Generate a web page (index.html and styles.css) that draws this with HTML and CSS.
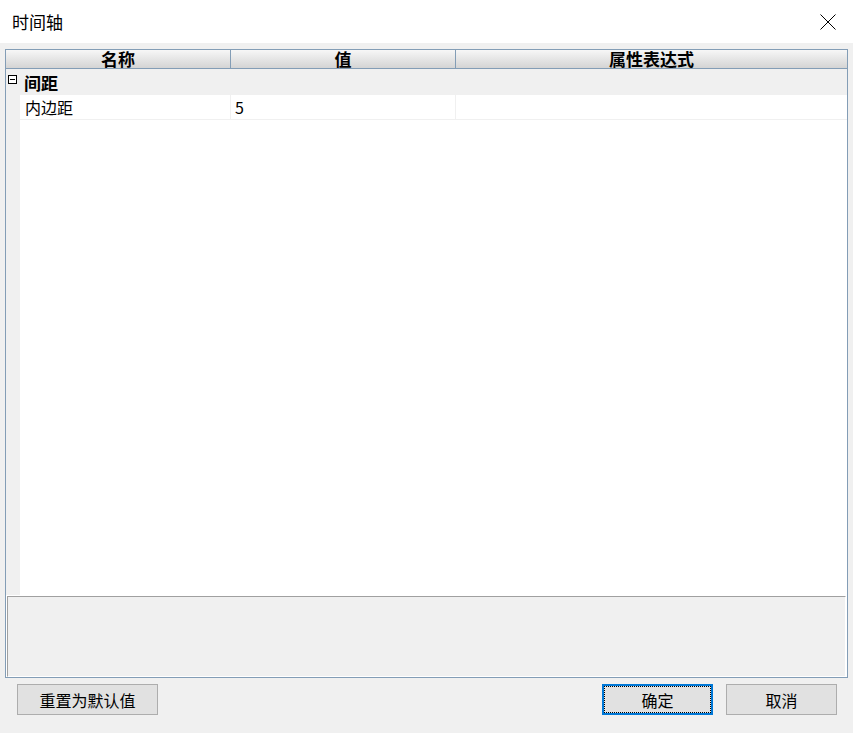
FILE: index.html
```html
<!DOCTYPE html>
<html lang="zh-CN">
<head>
    <meta charset="UTF-8">
    <title>时间轴</title>
    <link rel="stylesheet" href="styles.css">
</head>
<body>
    <div class="dialog">
        <!-- Title bar -->
        <div class="titlebar">
            <span class="title">时间轴</span>
            <svg class="close" width="16" height="16" viewBox="0 0 16 16">
                <path d="M0.5 0.5 L15.5 15.5 M15.5 0.5 L0.5 15.5" stroke="#000" stroke-width="1" fill="none"/>
            </svg>
        </div>

        <div class="content">
            <!-- Property grid -->
            <div class="grid">
                <div class="header">
                    <div class="hcell col1">名称</div>
                    <div class="hcell col2">值</div>
                    <div class="hcell col3">属性表达式</div>
                </div>
                <div class="tree">
                    <div class="group">
                        <span class="toggle"></span>
                        <span class="group-name">间距</span>
                    </div>
                    <div class="tree-rows">
                        <div class="gutter"></div>
                        <div class="rows">
                            <div class="row">
                                <div class="cell name">内边距</div>
                                <div class="cell value">5</div>
                                <div class="cell expr"></div>
                            </div>
                        </div>
                    </div>
                </div>
                <div class="desc"></div>
            </div>

            <!-- Buttons -->
            <div class="buttons">
                <button class="btn reset">重置为默认值</button>
                <div class="spacer"></div>
                <button class="btn ok">确定</button>
                <button class="btn cancel">取消</button>
            </div>
        </div>
    </div>
</body>
</html>
```

FILE: styles.css
```css
html, body {
    margin: 0;
    padding: 0;
}
body {
    width: 853px;
    height: 733px;
    background: #f0f0f0;
    font-family: "Noto Sans CJK SC", "DejaVu Sans", sans-serif;
    color: #000;
    overflow: hidden;
}
.dialog {
    display: flex;
    flex-direction: column;
    height: 733px;
}
.titlebar {
    height: 43px;
    background: #fff;
    display: flex;
    align-items: center;
    justify-content: space-between;
    padding: 0 17px 0 12px;
}
.title {
    font-size: 17px;
    line-height: 20px;
}
.close {
    display: block;
    margin-top: 1px;
}
.content {
    flex: 1;
    display: flex;
    flex-direction: column;
    padding: 6px 5px 0 5px;
}
.grid {
    height: 627px;
    border: 1px solid #839db6;
    display: flex;
    flex-direction: column;
    background: #fff;
}
.header {
    display: flex;
    height: 18px;
    border-bottom: 1px solid #839db6;
    background: linear-gradient(#f7f7f7, #d4d4d4);
}
.hcell {
    font-size: 17px;
    font-weight: bold;
    line-height: 18px;
    text-align: center;
    height: 18px;
}
.col1 {
    width: 224px;
    border-right: 1px solid #839db6;
}
.col2 {
    width: 224px;
    border-right: 1px solid #839db6;
}
.col3 {
    flex: 1;
}
.tree {
    flex: 1;
    display: flex;
    flex-direction: column;
}
.group {
    height: 26px;
    background: #f0f0f0;
    display: flex;
    align-items: center;
}
.toggle {
    width: 7px;
    height: 7px;
    border: 1px solid #000;
    margin: 0 0 5px 2px;
    position: relative;
    background: #fff;
}
.toggle::after {
    content: "";
    position: absolute;
    left: 1px;
    right: 1px;
    top: 3px;
    height: 1px;
    background: #000;
}
.group-name {
    font-size: 17px;
    font-weight: bold;
    margin-left: 7px;
}
.tree-rows {
    flex: 1;
    display: flex;
}
.gutter {
    width: 14px;
    background: #f0f0f0;
}
.rows {
    flex: 1;
    background: #fff;
}
.row {
    display: flex;
    height: 24px;
    border-bottom: 1px solid #f0f0f0;
}
.cell {
    font-size: 16px;
    line-height: 24px;
}
.name {
    width: 205px;
    padding-left: 5px;
    border-right: 1px solid #f0f0f0;
}
.value {
    width: 220px;
    padding-left: 4px;
    border-right: 1px solid #f0f0f0;
}
.expr {
    flex: 1;
}
.desc {
    height: 79px;
    margin: 1px 1px 0 1px;
    background: #f0f0f0;
    border-top: 1px solid #a0a0a0;
    border-left: 1px solid #a0a0a0;
    border-bottom: 1px solid #fff;
    border-right: 1px solid #fff;
}
.buttons {
    display: flex;
    margin-top: 6px;
    padding: 0 11px 0 12px;
}
.spacer {
    flex: 1;
}
.btn {
    height: 31px;
    background: #e1e1e1;
    border: 1px solid #adadad;
    font-family: "Noto Sans CJK SC", sans-serif;
    font-size: 16px;
    color: #000;
    padding: 0;
}
.reset {
    width: 141px;
}
.ok {
    width: 111px;
    border: 2px solid #0078d7;
    outline: 1px dotted #000;
    outline-offset: -3px;
}
.cancel {
    width: 111px;
    margin-left: 13px;
}
```
